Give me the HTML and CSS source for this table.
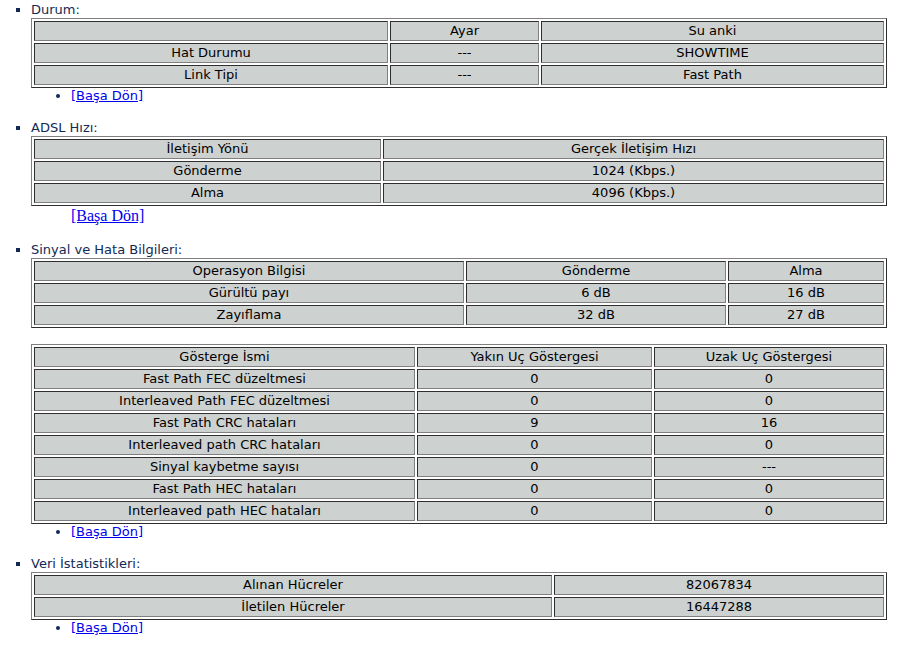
FILE: index.html
```html
<!DOCTYPE html>
<html lang="tr">
<head>
<meta charset="utf-8">
<title>ADSL Durumu</title>
<link rel="stylesheet" href="styles.css">
</head>
<body>
<ul class="sections">
  <li class="section">Durum:
    <table class="grid">
      <colgroup><col class="w354"><col class="w149"><col class="w343"></colgroup>
      <tr><td></td><td>Ayar</td><td>Su anki</td></tr>
      <tr><td>Hat Durumu</td><td>---</td><td>SHOWTIME</td></tr>
      <tr><td>Link Tipi</td><td>---</td><td>Fast Path</td></tr>
    </table>
    <ul class="back"><li><a href="#">[Başa Dön]</a></li></ul>
  </li>
  <li class="section">ADSL Hızı:
    <table class="grid">
      <colgroup><col class="w347"><col class="w501"></colgroup>
      <tr><td>İletişim Yönü</td><td>Gerçek İletişim Hızı</td></tr>
      <tr><td>Gönderme</td><td>1024 (Kbps.)</td></tr>
      <tr><td>Alma</td><td>4096 (Kbps.)</td></tr>
    </table>
    <div class="back-serif"><a href="#">[Başa Dön]</a></div>
  </li>
  <li class="section">Sinyal ve Hata Bilgileri:
    <table class="grid">
      <colgroup><col class="w430"><col class="w260"><col class="w156"></colgroup>
      <tr><td>Operasyon Bilgisi</td><td>Gönderme</td><td>Alma</td></tr>
      <tr><td>Gürültü payı</td><td>6 dB</td><td>16 dB</td></tr>
      <tr><td>Zayıflama</td><td>32 dB</td><td>27 dB</td></tr>
    </table>
    <table class="grid spaced">
      <colgroup><col class="w381"><col class="w235"><col class="w230"></colgroup>
      <tr><td>Gösterge İsmi</td><td>Yakın Uç Göstergesi</td><td>Uzak Uç Göstergesi</td></tr>
      <tr><td>Fast Path FEC düzeltmesi</td><td>0</td><td>0</td></tr>
      <tr><td>Interleaved Path FEC düzeltmesi</td><td>0</td><td>0</td></tr>
      <tr><td>Fast Path CRC hataları</td><td>9</td><td>16</td></tr>
      <tr><td>Interleaved path CRC hataları</td><td>0</td><td>0</td></tr>
      <tr><td>Sinyal kaybetme sayısı</td><td>0</td><td>---</td></tr>
      <tr><td>Fast Path HEC hataları</td><td>0</td><td>0</td></tr>
      <tr><td>Interleaved path HEC hataları</td><td>0</td><td>0</td></tr>
    </table>
    <ul class="back"><li><a href="#">[Başa Dön]</a></li></ul>
  </li>
  <li class="section">Veri İstatistikleri:
    <table class="grid">
      <colgroup><col class="w518"><col class="w330"></colgroup>
      <tr><td>Alınan Hücreler</td><td>82067834</td></tr>
      <tr><td>İletilen Hücreler</td><td>16447288</td></tr>
    </table>
    <ul class="back"><li><a href="#">[Başa Dön]</a></li></ul>
  </li>
</ul>
</body>
</html>
```

FILE: styles.css
```css
html, body {
  margin: 0;
  padding: 0;
  background: #ffffff;
}

body {
  font-family: "DejaVu Sans", Verdana, sans-serif;
  font-size: 13px;
  line-height: 16px;
  color: #000000;
}

.sections {
  margin: 2px 0 0 0;
  padding: 0 0 0 31px;
  list-style-type: square;
  color: #112a55;
}

.section + .section {
  margin-top: 16px;
}

.grid {
  width: 856px;
  table-layout: fixed;
  border-collapse: separate;
  border-spacing: 2px;
  border-style: solid;
  border-width: 1px;
  border-color: #808080 #2e2e2e #2e2e2e #808080;
  color: #000000;
}

.grid td {
  background: #cdd1d0;
  text-align: center;
  padding: 1px;
  height: 16px;
  line-height: 16px;
  white-space: nowrap;
  border-style: solid;
  border-width: 1px;
  border-color: #2e2e2e #808080 #808080 #2e2e2e;
}

.spaced {
  margin-top: 16px;
}

.w354 { width: 354px; }
.w149 { width: 149px; }
.w343 { width: 343px; }
.w347 { width: 347px; }
.w501 { width: 501px; }
.w430 { width: 430px; }
.w260 { width: 260px; }
.w156 { width: 156px; }
.w381 { width: 381px; }
.w235 { width: 235px; }
.w230 { width: 230px; }
.w518 { width: 518px; }
.w330 { width: 330px; }

.back {
  margin: 0;
  padding: 0 0 0 40px;
  list-style-type: disc;
}

.back a,
.back-serif a {
  color: #0000ee;
  text-decoration: underline;
}

.back-serif {
  padding-left: 40px;
  font-family: "Liberation Serif", "Times New Roman", serif;
  font-size: 16px;
  line-height: 20px;
}
```
